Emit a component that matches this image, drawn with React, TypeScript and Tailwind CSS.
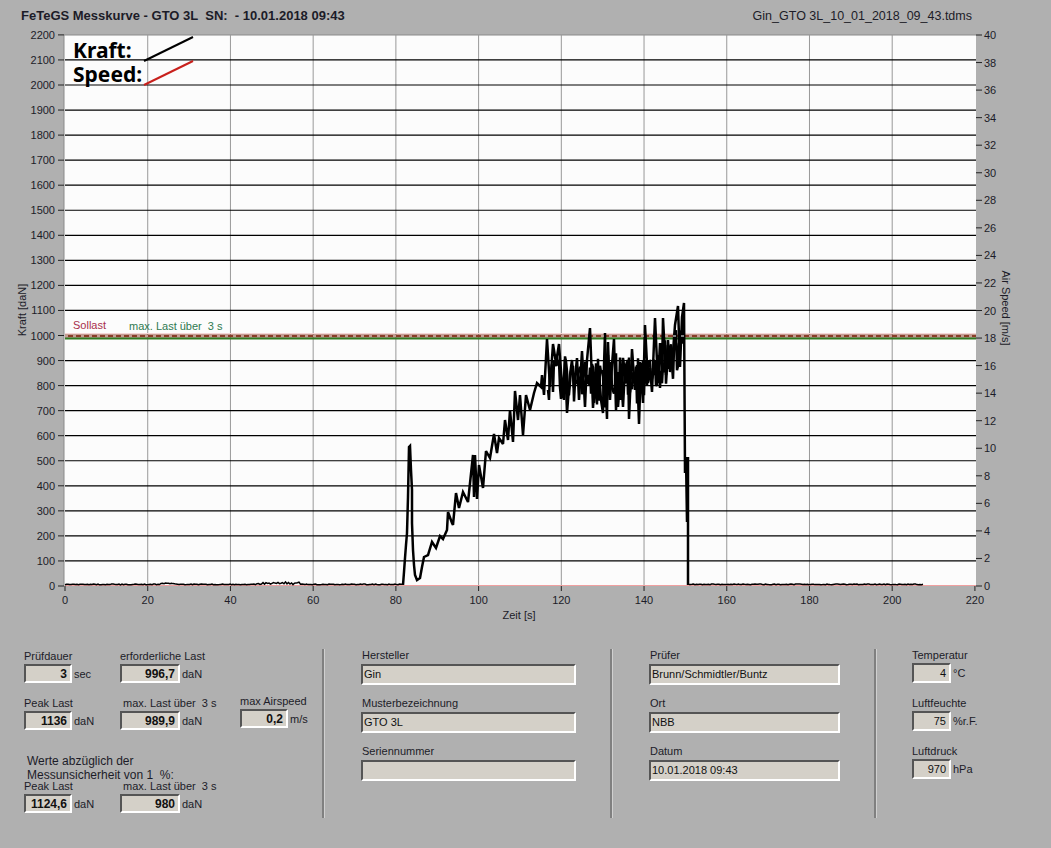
import type { ReactNode } from "react";

const X0 = 65;
const XS = 4.136;
const Y0 = 586;
const YS = 0.2505;

const xTicks = Array.from({ length: 12 }, (_, i) => i * 20);
const yTicks = Array.from({ length: 23 }, (_, i) => i * 100);
const speedTicks = Array.from({ length: 21 }, (_, i) => i * 2);

// load curve read off the measurement, in picture coordinates
const CURVE: [number, number][] = [
  [403, 585], [404, 572], [405, 558], [406, 545], [407, 533], [408, 497], [409, 447], [410, 446], [411, 470], [412, 490], [412, 523],
  [413, 550], [414, 565], [415, 575], [417, 580], [420, 578], [422, 567], [424, 557], [428, 555], [432, 542], [436, 548],
  [440, 536], [443, 539], [447, 530], [448, 512], [452, 523], [453, 525], [456, 493], [459, 508], [463, 492],
  [468, 502], [473, 455], [474, 497], [475, 455], [477, 499], [479, 465], [483, 488], [486, 451], [490, 458],
  [494, 434], [497, 453], [499, 438], [503, 444], [505, 420], [508, 440], [510, 410], [513, 442], [515, 391],
  [518, 420], [520, 395], [523, 435], [526, 395], [530, 410], [534, 393], [537, 383], [541, 387], [542, 375],
  [544, 395], [547, 339], [550, 387], [553, 344], [556, 363], [559, 344], [563, 398], [565, 359], [567, 413],
  [570, 375], [572, 360], [574, 388], [577, 358], [579, 400], [582, 351], [585, 407], [587, 360], [590, 328],
  [593, 408], [595, 377], [597, 395], [599, 370], [601, 400], [603, 413], [604, 365], [605, 333], [606, 395],
  [607, 419], [608, 342], [610, 400], [612, 365], [614, 339], [616, 410], [618, 372], [620, 398], [621, 375],
  [623, 407], [625, 368], [628, 360], [629, 419], [632, 349], [635, 390], [637, 365], [639, 424], [641, 363],
  [643, 403], [645, 325], [648, 383], [650, 368], [652, 392], [655, 318], [658, 383], [660, 343], [662, 372],
  [663, 318], [666, 375], [668, 340], [670, 372], [673, 352], [675, 325], [678, 306], [680, 367], [682, 317],
  [684, 303], [685, 473], [686, 457], [687, 522], [688, 457], [688, 585],
];

function noise(i: number) {
  return Math.abs(Math.sin(i * 12.9898) * 43758.5453) % 1;
}

function baseline(from: number, to: number) {
  const pts: string[] = [];
  for (let x = from; x < to; x += 1.5) {
    let lift = noise(x) * 0.8;
    if (x > 160 && x < 175) lift += 1;
    if (x > 255 && x < 300) lift += noise(x + 3) * 2.2;
    pts.push(`${x},${(584.8 - lift).toFixed(1)}`);
  }
  return pts.join(" ");
}

// the fast oscillation around the plateau, too dense to read point by point
function plateau() {
  const pts: string[] = [];
  for (let x = 548; x < 684; x += 1) {
    const centre = x < 645 ? 380 : 380 - (x - 645) * 0.85;
    const reach = x > 595 && x < 625 ? 28 : 24;
    pts.push(`${x},${(centre + (noise(x * 1.7) - 0.5) * 2 * reach).toFixed(1)}`);
  }
  return pts.join(" ");
}

function Chart() {
  return (
    <svg viewBox="0 26 1051 604" className="block h-[604px] w-[1051px] fill-[#1c1c28] text-[11px]">
      <rect x={X0 - 1} y={35} width={912} height={551} fill="#fcfcfc" />
      <line x1={X0 - 1} x2={976} y1={35} y2={35} stroke="#8a8a8a" strokeWidth={1} />
      <line x1={X0 - 1} x2={X0 - 1} y1={35} y2={586} stroke="#8a8a8a" strokeWidth={1} />

      {xTicks.map((t) => {
        const x = X0 + t * XS;
        return (
          <g key={t}>
            {t > 0 && t < 220 && <line x1={x} x2={x} y1={35} y2={586} stroke="#999" strokeWidth={1} />}
            <line x1={x} x2={x} y1={586} y2={591} stroke="#222" strokeWidth={1} />
            <text x={x} y={604} textAnchor="middle">{t}</text>
          </g>
        );
      })}
      {yTicks.map((t) => {
        const y = Y0 - t * YS;
        return (
          <g key={t}>
            {t > 0 && t < 2200 && <line x1={X0} x2={976} y1={y} y2={y} stroke="#000" strokeWidth={1.2} />}
            <line x1={58} x2={64} y1={y} y2={y} stroke="#222" strokeWidth={1} />
            <text x={55} y={y + 4} textAnchor="end">{t}</text>
          </g>
        );
      })}
      {speedTicks.map((t) => {
        const y = Y0 - t * 13.775;
        return (
          <g key={t}>
            <line x1={976} x2={982} y1={y} y2={y} stroke="#222" strokeWidth={1} />
            <text x={984} y={y + 4}>{t}</text>
          </g>
        );
      })}

      <text x={519} y={619} textAnchor="middle">Zeit [s]</text>
      <text transform="translate(26 310) rotate(-90)" textAnchor="middle">Kraft [daN]</text>
      <text transform="translate(1002 308) rotate(90)" textAnchor="middle">Air Speed [m/s]</text>

      <line x1={X0} x2={976} y1={585.5} y2={585.5} stroke="#f0a0a0" strokeWidth={1} />
      <line x1={X0} x2={976} y1={333.5} y2={333.5} stroke="#f5d6d6" strokeWidth={1} />
      <line x1={X0} x2={976} y1={336} y2={336} stroke="#8a3d2a" strokeWidth={3} />
      <line x1={X0} x2={976} y1={338.5} y2={338.5} stroke="#2f7a22" strokeWidth={2} />

      <text x={73} y={329} className="fill-[#a8304c]">Sollast</text>
      <text x={129} y={330} xmlSpace="preserve" className="fill-[#2f7a50]">max. Last über  3 s</text>

      <polyline points={baseline(X0, 403)} fill="none" stroke="#000" strokeWidth={1.5} />
      <polyline points={baseline(689, 924)} fill="none" stroke="#000" strokeWidth={1.5} />
      <polyline points={plateau()} fill="none" stroke="#000" strokeWidth={2.5} strokeLinejoin="miter" strokeMiterlimit={3} />
      <polyline
        points={CURVE.map(([x, y]) => `${x},${y}`).join(" ")}
        fill="none"
        stroke="#000"
        strokeWidth={2.5}
        strokeLinejoin="miter"
        strokeMiterlimit={3}
      />
      <line x1={X0} x2={976} y1={336} y2={336} stroke="#fff" strokeWidth={1} strokeDasharray="3 5" />

      <text x={73} y={58} className="fill-[#000] font-['Noto_Sans',sans-serif] text-[21px] font-bold">Kraft:</text>
      <text x={73} y={82} className="fill-[#000] font-['Noto_Sans',sans-serif] text-[21px] font-bold">Speed:</text>
      <line x1={144} y1={61} x2={193} y2={37} stroke="#000" strokeWidth={2} />
      <line x1={144} y1={85} x2={193} y2={61} stroke="#c8201c" strokeWidth={2} />
    </svg>
  );
}

function Value({ className, children }: { className: string; children?: ReactNode }) {
  return (
    <div
      className={`flex items-center border-2 border-t-[#555] border-l-[#555] border-r-white border-b-white bg-[#d4d0c8] text-[#111] ${className}`}
    >
      {children}
    </div>
  );
}

function Reading({
  label,
  value,
  unit,
  width,
  labelClass = "",
}: {
  label: string;
  value: string;
  unit: string;
  width: string;
  labelClass?: string;
}) {
  return (
    <div>
      <div className={`h-[14px] leading-[14px] whitespace-pre ${labelClass}`}>{label}</div>
      <div className="mt-px flex items-center">
        <Value className={`h-[19px] justify-end pr-[3px] text-[12px] font-bold ${width}`}>{value}</Value>
        <span className="ml-[2px] mt-[2px]">{unit}</span>
      </div>
    </div>
  );
}

function TextField({ label, value, gap }: { label: string; value?: string; gap: string }) {
  return (
    <div className={gap}>
      <div className="h-[14px] pl-px leading-[12px]">{label}</div>
      <Value className="mt-px h-[21px] pl-px">{value}</Value>
    </div>
  );
}

function Climate({ label, value, unit, gap }: { label: string; value: string; unit: string; gap: string }) {
  return (
    <div className={gap}>
      <div className="h-[14px] leading-[12px]">{label}</div>
      <div className="flex items-center">
        <Value className="h-[20px] w-[39px] justify-end pr-[3px]">{value}</Value>
        <span className="ml-[2px]">{unit}</span>
      </div>
    </div>
  );
}

function Divider() {
  return <div className="h-[169px] w-[3px] shrink-0 border-r border-[#d0d0d0] bg-[#808080]" />;
}

export default function App() {
  return (
    <div className="h-[848px] w-[1051px] overflow-hidden bg-[#b0b0b0] font-['Liberation_Sans',sans-serif] text-[11px] text-[#1c1c28]">
      <header className="flex h-[26px] items-start justify-between pl-[21px] pr-[79px] pt-[8px] leading-[16px]">
        <span className="text-[13px] font-bold whitespace-pre">FeTeGS Messkurve - GTO 3L  SN:  - 10.01.2018 09:43</span>
        <span className="text-[12.5px]">Gin_GTO 3L_10_01_2018_09_43.tdms</span>
      </header>

      <Chart />

      <section className="mt-[19px] flex items-start">
        <div className="w-[322px] shrink-0 pl-[24px]">
          <div className="grid grid-cols-[96px_120px_auto]">
            <Reading label="Prüfdauer" value="3" unit="sec" width="w-[48px]" />
            <Reading label="erforderliche Last" value="996,7" unit="daN" width="w-[60px]" />
            <div />
          </div>
          <div className="mt-[13px] grid grid-cols-[96px_120px_auto]">
            <Reading label="Peak Last" value="1136" unit="daN" width="w-[48px]" />
            <Reading label="max. Last über  3 s" value="989,9" unit="daN" width="w-[60px]" labelClass="pl-[3px]" />
            <div className="-mt-[2px]">
              <Reading label="max Airspeed" value="0,2" unit="m/s" width="w-[48px]" />
            </div>
          </div>
          <div className="mt-[24px] pl-[3px] text-[12px] leading-[14px]">
            <div>Werte abzüglich der</div>
            <div className="whitespace-pre">Messunsicherheit von 1  %:</div>
          </div>
          <div className="-mt-[3px] grid grid-cols-[96px_120px_auto]">
            <Reading label="Peak Last" value="1124,6" unit="daN" width="w-[48px]" />
            <Reading label="max. Last über  3 s" value="980" unit="daN" width="w-[60px]" labelClass="pl-[3px]" />
            <div />
          </div>
        </div>
        <Divider />
        <div className="w-[285px] shrink-0 pl-[36px] pr-[34px]">
          <TextField label="Hersteller" value="Gin" gap="" />
          <TextField label="Musterbezeichnung" value="GTO 3L" gap="mt-[12px]" />
          <TextField label="Seriennummer" gap="mt-[12px]" />
        </div>
        <Divider />
        <div className="w-[261px] shrink-0 pl-[36px] pr-[34px]">
          <TextField label="Prüfer" value="Brunn/Schmidtler/Buntz" gap="" />
          <TextField label="Ort" value="NBB" gap="mt-[12px]" />
          <TextField label="Datum" value="10.01.2018 09:43" gap="mt-[12px]" />
        </div>
        <Divider />
        <div className="pl-[35px]">
          <Climate label="Temperatur" value="4" unit="°C" gap="" />
          <Climate label="Luftfeuchte" value="75" unit="%r.F." gap="mt-[14px]" />
          <Climate label="Luftdruck" value="970" unit="hPa" gap="mt-[14px]" />
        </div>
      </section>
    </div>
  );
}
